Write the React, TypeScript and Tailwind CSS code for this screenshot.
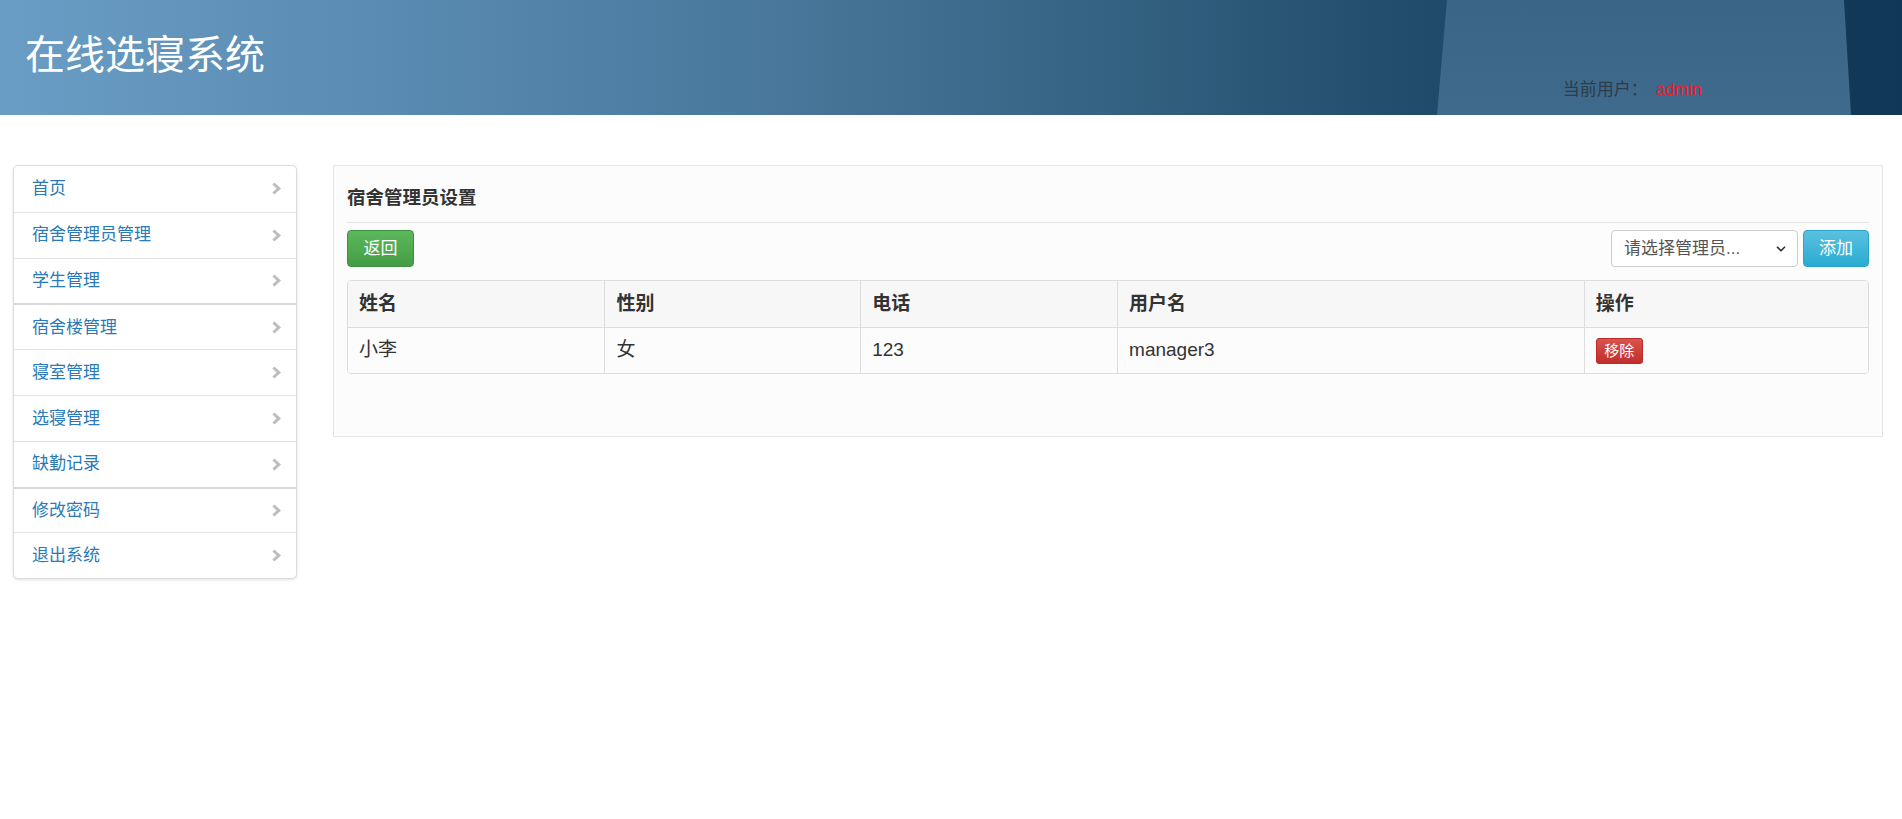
import { ChevronDown } from "lucide-react";

const menu = [
  { label: "首页" },
  { label: "宿舍管理员管理" },
  { label: "学生管理", groupEnd: true },
  { label: "宿舍楼管理" },
  { label: "寝室管理" },
  { label: "选寝管理" },
  { label: "缺勤记录", groupEnd: true },
  { label: "修改密码" },
  { label: "退出系统" },
];

const rows = [{ name: "小李", sex: "女", phone: "123", username: "manager3" }];

function Chevron() {
  return (
    <svg width="10" height="13" viewBox="0 0 10 13" className="shrink-0">
      <path d="M2.4 0.5 L9 6.5 L2.4 12.5 L0.4 10.5 L4.6 6.5 L0.4 2.5 Z" fill="#bdbdbd" />
    </svg>
  );
}

export default function App() {
  return (
    <div className="min-h-screen bg-white font-['Liberation_Sans','Noto_Sans_CJK_SC',sans-serif] text-[#333]">
      {/* HEADER */}
      <header className="relative flex h-[115px] justify-between overflow-hidden bg-[linear-gradient(90deg,#6a9dc5_0%,#5a8bb2_20%,#47769a_42%,#32607f_60%,#224c6c_74%,#163e5e_88%,#113757_100%)]">
        <div className="pointer-events-none absolute inset-y-0 left-[1437px] w-[414px] bg-[linear-gradient(180deg,#3b6586_0%,#3f6a8b_100%)] [clip-path:polygon(2.4%_0,98.3%_0,100%_100%,0_100%)]" />

        <h1 className="relative z-10 pl-[25px] pt-[26px] font-['Noto_Sans_CJK_SC',sans-serif] text-[40px] leading-[52px] font-normal text-white">
          在线选寝系统
        </h1>

        <div className="relative z-10 mr-[200px] mb-[14px] self-end text-[17px] leading-[22px]">
          <span className="text-[#2c3c4c]">当前用户：</span>
          <span className="ml-[8px] text-[#f0192c]">admin</span>
        </div>
      </header>

      {/* BODY */}
      <div className="flex items-start gap-[36px] pt-[50px] pr-[19px] pl-[13px]">
        {/* SIDEBAR */}
        <nav className="w-[284px] shrink-0 overflow-hidden rounded-[5px] border border-[#dddddd] bg-white shadow-[0_1px_3px_rgba(0,0,0,0.12)]">
          {menu.map((item, i) => (
            <div
              key={item.label}
              className={`flex h-[45.8px] items-center justify-between pr-[14px] pl-[18px] ${
                i === 0 ? "" : menu[i - 1].groupEnd ? "border-t-2 border-[#d9d9d9]" : "border-t border-[#e3e3e3]"
              }`}
            >
              <span className="text-[17px] text-[#2a7ab8]">{item.label}</span>
              <Chevron />
            </div>
          ))}
        </nav>

        {/* MAIN PANEL */}
        <main className="min-w-0 flex-1 border border-[#e6e6e6] bg-[#fcfcfc] px-[13px] pb-[62px]">
          <div className="border-b border-[#e4e4e4] pt-[19px] pb-[11px]">
            <h2 className="text-[18.5px] leading-[26px] font-bold text-[#333]">宿舍管理员设置</h2>
          </div>

          <div className="mt-[7px] flex items-center justify-between">
            <button className="h-[37px] w-[67px] rounded-[4px] border border-[#3e8f3e] bg-[linear-gradient(180deg,#5cb85c_0%,#449d44_100%)] text-[17px] text-white">
              返回
            </button>

            <div className="flex items-center gap-[5px]">
              <div className="relative flex h-[37px] w-[187px] items-center rounded-[4px] border border-[#cccccc] bg-white pl-[12px] text-[17px] text-[#555]">
                请选择管理员...
                <ChevronDown size={14} strokeWidth={3} className="absolute right-[9px] text-[#333]" />
              </div>
              <button className="h-[37px] w-[66px] rounded-[4px] border border-[#28a4c9] bg-[linear-gradient(180deg,#5bc0de_0%,#2aabd2_100%)] text-[17px] text-white">
                添加
              </button>
            </div>
          </div>

          <div className="mt-[13px] overflow-hidden rounded-[4px] border border-[#dddddd]">
            <table className="w-full table-fixed border-collapse text-[19px]">
              <thead>
                <tr className="h-[46px] bg-[#f7f7f7]">
                  <th className="w-[16.9%] border-r border-b border-[#dddddd] px-[11px] text-left font-bold">姓名</th>
                  <th className="w-[16.83%] border-r border-b border-[#dddddd] px-[11px] text-left font-bold">性别</th>
                  <th className="w-[16.9%] border-r border-b border-[#dddddd] px-[11px] text-left font-bold">电话</th>
                  <th className="w-[30.7%] border-r border-b border-[#dddddd] px-[11px] text-left font-bold">用户名</th>
                  <th className="border-b border-[#dddddd] px-[11px] text-left font-bold">操作</th>
                </tr>
              </thead>
              <tbody>
                {rows.map((r) => (
                  <tr key={r.username} className="h-[46px] bg-[#fcfcfc]">
                    <td className="border-r border-[#dddddd] px-[11px]">{r.name}</td>
                    <td className="border-r border-[#dddddd] px-[11px]">{r.sex}</td>
                    <td className="border-r border-[#dddddd] px-[11px]">{r.phone}</td>
                    <td className="border-r border-[#dddddd] px-[11px]">{r.username}</td>
                    <td className="px-[11px]">
                      <button className="h-[26px] w-[47px] rounded-[3px] border border-[#b92c28] bg-[linear-gradient(180deg,#d9534f_0%,#c12e2a_100%)] text-[15px] leading-none text-white">
                        移除
                      </button>
                    </td>
                  </tr>
                ))}
              </tbody>
            </table>
          </div>
        </main>
      </div>
    </div>
  );
}
